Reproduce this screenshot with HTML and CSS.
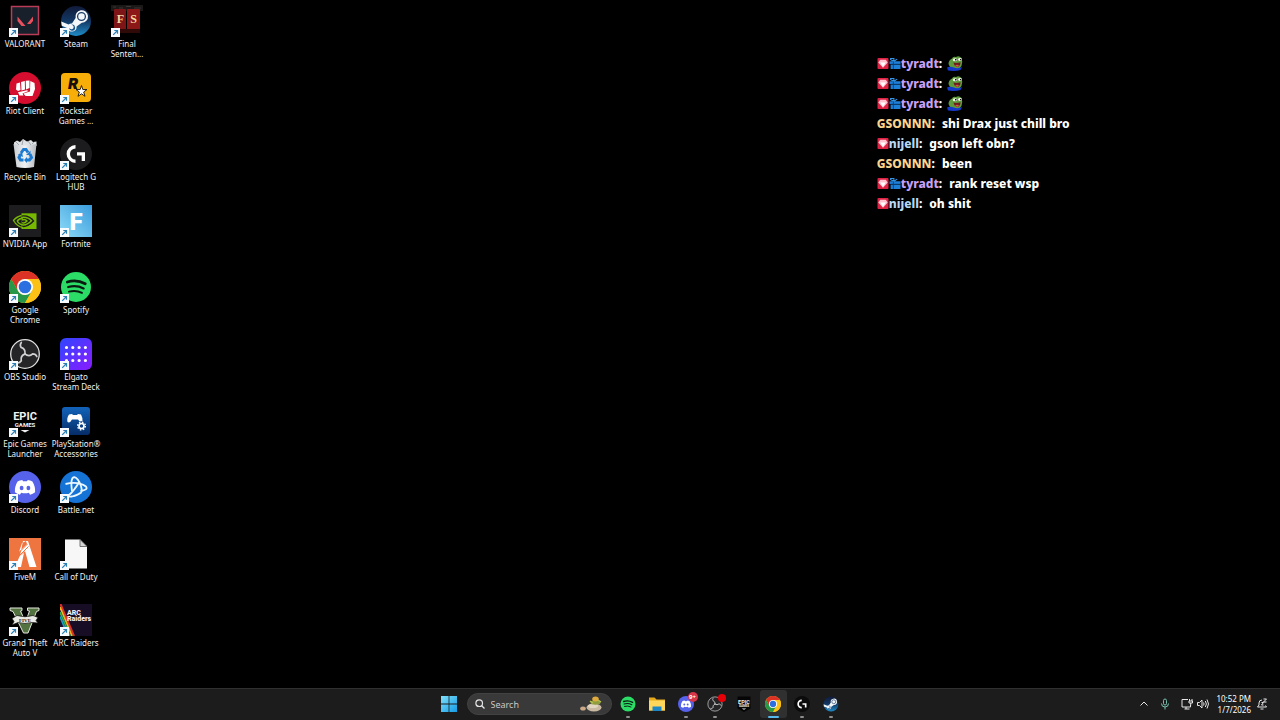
FILE: index.html
```html
<!DOCTYPE html>
<html lang="en">
  <head>
    <meta charset="UTF-8" />
    <meta name="viewport" content="width=device-width, initial-scale=1.0" />
    <title>Desktop</title>
    <link rel="stylesheet" href="styles.css">
  </head>
  <body>
    <!-- Shared icons -->
    <svg class="sprite" aria-hidden="true">
      <defs>
        <linearGradient id="steamBg" x1="0" y1="0" x2="0" y2="1">
          <stop offset="0" stop-color="#101a3a" />
          <stop offset="0.5" stop-color="#123763" />
          <stop offset="1" stop-color="#1f8cc9" />
        </linearGradient>
        <linearGradient id="fortniteBg" x1="0" y1="1" x2="1" y2="0">
          <stop offset="0" stop-color="#8fdcf8" />
          <stop offset="1" stop-color="#3a9bdc" />
        </linearGradient>
        <linearGradient id="elgatoBg" x1="0" y1="0" x2="1" y2="1">
          <stop offset="0" stop-color="#2f46ff" />
          <stop offset="1" stop-color="#8a1cff" />
        </linearGradient>
        <linearGradient id="psBg" x1="0" y1="0" x2="0" y2="1">
          <stop offset="0" stop-color="#1263ba" />
          <stop offset="1" stop-color="#062c66" />
        </linearGradient>
        <linearGradient id="winBg" x1="0" y1="0" x2="1" y2="1">
          <stop offset="0" stop-color="#7fe0fa" />
          <stop offset="1" stop-color="#149ce6" />
        </linearGradient>
        <linearGradient id="binBg" x1="0" y1="0" x2="1" y2="0">
          <stop offset="0" stop-color="#c9cdd1" />
          <stop offset="0.5" stop-color="#eef0f2" />
          <stop offset="1" stop-color="#b4b9be" />
        </linearGradient>
      </defs>
      <symbol id="steam" viewBox="0 0 32 32">
        <circle cx="16" cy="16" r="15" fill="url(#steamBg)" />
        <path d="M1.2 16.5 8.5 19.5Q10.300 18.300 12 18.500L15.600 13A6.300 6.300 0 1 1 21.800 17.800L16.600 21.500A4.600 4.600 0 0 1 7.600 23.200L1.800 20.800Z" fill="#f4f7fa" />
        <circle cx="21.500" cy="11.500" r="3.900" fill="none" stroke="#1b3c66" stroke-width="1.300" />
        <path d="M9 23.300A3.100 3.100 0 1 0 11.300 19.600L13 20.400A2.300 2.300 0 0 1 11.200 24.300Z" fill="#1c568c" />
      </symbol>
      <symbol id="logi" viewBox="0 0 32 32">
        <circle cx="16" cy="16" r="16" fill="#1c1c1e" />
        <path d="M15.500 8.800A7.200 7.200 0 0 0 15.500 23.200" fill="none" stroke="#fff" stroke-width="3.400" />
        <path d="M17 14.300H25V23H21.700V17.600H17Z" fill="#fff" />
      </symbol>
      <symbol id="chrome" viewBox="0 0 32 32">
        <circle cx="16" cy="16" r="16" fill="#fbc116" />
        <path d="M2.140 8A16 16 0 0 1 29.860 8H16L9.070 20Z" fill="#dc3226" />
        <path d="M2.140 8 9.070 20Q12 24 16 24L22.900 20 16 32A16 16 0 0 1 2.140 8Z" fill="#279847" />
        <path d="M29.860 8H16A8 8 0 0 1 22.930 20L16 32A16 16 0 0 0 29.860 8Z" fill="#fbc116" />
        <circle cx="16" cy="16" r="8" fill="#fff" />
        <circle cx="16" cy="16" r="6.300" fill="#2b6fe0" />
      </symbol>
      <symbol id="spotify" viewBox="0 0 32 32">
        <circle cx="16" cy="16" r="15" fill="#2bdc66" />
        <g fill="none" stroke="#0b1a10" stroke-linecap="round">
          <path d="M7.300 11Q16.500 8 25.300 12.700" stroke-width="2.800" />
          <path d="M8.200 16Q16.400 13.600 23.600 17.400" stroke-width="2.300" />
          <path d="M9 20.700Q15.900 18.700 22 21.900" stroke-width="1.900" />
        </g>
      </symbol>
      <symbol id="obs" viewBox="0 0 32 32">
        <circle cx="16" cy="16" r="14.300" fill="#252427" stroke="#dedede" stroke-width="1.300" />
        <g fill="none" stroke="#d0d0d0" stroke-width="1.700" stroke-linecap="round">
          <path d="M16 16.200C16.500 12.500 14.600 10.200 12 9.400C11 7.600 11.200 5.900 12.300 4.500" />
          <path d="M16 16.200C16.500 12.500 14.600 10.200 12 9.400C11 7.600 11.200 5.900 12.300 4.500" transform="rotate(120 16 16)" />
          <path d="M16 16.200C16.500 12.500 14.600 10.200 12 9.400C11 7.600 11.200 5.900 12.300 4.500" transform="rotate(240 16 16)" />
        </g>
      </symbol>
      <symbol id="discord" viewBox="0 0 32 32">
        <circle cx="16" cy="16" r="16" fill="#5662ea" />
        <path d="M13.300 9Q10.600 9.300 8.600 10.500Q5.500 15.500 5.900 21.300Q8.200 23.200 10.900 23.700L12.200 21.700Q16 22.700 19.800 21.700L21.100 23.700Q23.800 23.200 26.100 21.300Q26.500 15.500 23.400 10.500Q21.400 9.300 18.700 9L18 10.300Q16 10 14 10.300Z" fill="#fff" />
        <ellipse cx="12.600" cy="17" rx="1.900" ry="2.200" fill="#5662ea" />
        <ellipse cx="19.400" cy="17" rx="1.900" ry="2.200" fill="#5662ea" />
      </symbol>
      <symbol id="shortcut" viewBox="0 0 9 9">
        <path d="M0 0H9V9H0Z" fill="#f8fbfd" />
        <path d="M2.200 6.900 6 3M3.300 2.500H6.500V5.700" fill="none" stroke="#2b7fb5" stroke-width="1.200" />
      </symbol>
      <symbol id="diamond" viewBox="0 0 10 10">
        <rect width="10" height="10" rx="1" fill="#dc2344" />
        <path d="M2.500 1.500H7.500L9.300 4.200 5 8.800 .7 4.200Z" fill="#ffc3cf" />
        <path d="M2.500 4H7.500L5 8Z" fill="#fff" />
      </symbol>
      <symbol id="gift" viewBox="0 0 10 10">
        <path d="M0 3H10V5.500H0ZM1 6H10V10H1Z" fill="#1d7fd6" />
        <path d="M4 3V.5H1V1.500L4 3 7 1" fill="none" stroke="#3296e8" />
        <path d="M3.500 3V10M1 5.700H10" stroke="#0b3768" stroke-width=".7" />
      </symbol>
      <symbol id="pepe" viewBox="0 0 16 16">
        <path d="M1.500 9Q1.500 5 5 3.500Q6 1 9 2Q12 0 14.500 3Q16 7 14.500 11L12 14H4Z" fill="#5e9b3d" />
        <path d="M0 12.500Q3 11 7 12.500 11 14 15 12L13.500 15Q8 16.500 1 15.500Z" fill="#1539c9" />
        <ellipse cx="8" cy="4.700" rx="2.300" ry="1.500" fill="#f3f6ea" />
        <ellipse cx="13" cy="4.500" rx="1.900" ry="1.400" fill="#f3f6ea" />
        <path d="M8 4H9.500V5.500H8ZM13 4H14.300V5.300H13Z" fill="#111" />
        <path d="M6.500 7.500Q10 8.500 13.500 7.200Q13.500 11.500 10 12 7 11 6.500 7.500Z" fill="#6e1f1b" />
        <path d="M8 10.500Q10 9 12 10.300L10.300 12Z" fill="#df4c50" />
      </symbol>
    </svg>

    <main class="desktop">
      <section class="icons" aria-label="Desktop icons">
        <button class="icon">
          <svg class="art" viewBox="0 0 32 32">
            <rect x="2.500" y="1.500" width="27" height="28" fill="#17202b" stroke="#b83c57" stroke-width="1.500" />
            <path d="M8.500 11.500 16.500 21H12.500L8.500 16ZM24 11.500V16L21.500 19H18Z" fill="#e8505f" />
          </svg>
          <svg class="arrow"><use href="#shortcut" /></svg>
          <span class="label">VALORANT</span>
        </button>
        <button class="icon">
          <svg class="art" viewBox="0 0 32 32">
            <circle cx="16" cy="16" r="16" fill="#d50d2f" />
            <path d="M7.500 11.500 11 10.500 11.500 18 9 19 7 17.500ZM12 10 15.800 9 16 17.500 12.500 18.500ZM16.700 8.800 20.500 8.500V16L17 17.500ZM21.300 9 25.500 11 26 17 23.500 24H16.500L14.500 21.500 21 19.500ZM9 20.200 18 18.200 19.500 19 13.500 21.500 14.500 23.500H10.500Z" fill="#fff" />
          </svg>
          <svg class="arrow"><use href="#shortcut" /></svg>
          <span class="label">Riot Client</span>
        </button>
        <button class="icon">
          <svg class="art" viewBox="0 0 32 32">
            <path d="M5 4.500 8 2.500 11 4 14 1 18 3.500 22 2 24 4 27.500 3.500V8H5Z" fill="#dfe2e4" />
            <path d="M7 4 10 7M14 2 13 7M19 3 22 7M25 4 23 6" stroke="#8f969c" stroke-width=".8" />
            <path d="M4.500 6Q16 8.500 27.500 6L25 29Q16 31 7.500 29Z" fill="url(#binBg)" />
            <g fill="none" stroke="#1c7bd0" stroke-width="3">
              <path d="M12 15 14.500 11.500H17L19 14.500" />
              <path d="M21 16 22.500 19.500 20.500 22H17" />
              <path d="M14.500 22H11.500L10 19.500 11.500 16.500" />
            </g>
            <path d="M21.500 12.500V17H17ZM18 19V25L15 22ZM9 16.500 13 14.500 14 19Z" fill="#1c7bd0" />
          </svg>
          <span class="label">Recycle Bin</span>
        </button>
        <button class="icon">
          <svg class="art" viewBox="0 0 32 32">
            <rect width="32" height="32" fill="#1d1d1f" />
            <path d="M12.500 8.300H27.500V24H12.500Z" fill="#76b900" />
            <path d="M12.500 10.500Q21 9.500 25.500 16 19.500 22.500 12.500 22.500Z" fill="#1d1d1f" />
            <g fill="none" stroke="#76b900">
              <path d="M12.500 10.500Q7 12 4.500 15.500 8 21.500 14 22.500" stroke-width="1.300" />
              <path d="M12.500 12.500Q18.500 11.500 22.500 15.800 18 20.300 14 20Q9.500 19 8.300 16 10 13.500 14 13.300" stroke-width="1.400" />
              <path d="M13 15Q16 13.500 18 16 15 19 13 17.500" stroke-width="1.400" />
            </g>
          </svg>
          <svg class="arrow"><use href="#shortcut" /></svg>
          <span class="label">NVIDIA App</span>
        </button>
        <button class="icon">
          <svg class="art"><use href="#chrome" /></svg>
          <svg class="arrow"><use href="#shortcut" /></svg>
          <span class="label">Google Chrome</span>
        </button>
        <button class="icon">
          <svg class="art"><use href="#obs" /></svg>
          <svg class="arrow"><use href="#shortcut" /></svg>
          <span class="label">OBS Studio</span>
        </button>
        <button class="icon">
          <svg class="art" viewBox="0 0 32 32">
            <text class="epic-word" x="16" y="15" text-anchor="middle">EPIC</text>
            <text class="games-word" x="16" y="22" text-anchor="middle">GAMES</text>
            <path d="M11.500 25H20.500L16 27.500Z" fill="#eee" />
          </svg>
          <svg class="arrow"><use href="#shortcut" /></svg>
          <span class="label">Epic Games Launcher</span>
        </button>
        <button class="icon">
          <svg class="art"><use href="#discord" /></svg>
          <svg class="arrow"><use href="#shortcut" /></svg>
          <span class="label">Discord</span>
        </button>
        <button class="icon">
          <svg class="art" viewBox="0 0 32 32">
            <rect width="32" height="32" fill="#ee7440" />
            <path d="M14 3H19L27.500 29H20.500L16 13 11 18ZM13 5 10 14 18 6 17 3ZM10.500 18.500 6 29H12L15 15Z" fill="#fff" />
            <path d="M9 15.500 18.500 6M9 19 19.500 8.500" stroke="#ee7440" stroke-width="1" />
          </svg>
          <svg class="arrow"><use href="#shortcut" /></svg>
          <span class="label">FiveM</span>
        </button>
        <button class="icon">
          <svg class="art" viewBox="0 0 32 32">
            <path d="M1 4H13V6.500L11.500 7 16.500 18 20.500 7 18.500 6.500V4H30V6.500L27.500 7.500 19 29H14.500L4 7.500 1 6.500Z" fill="#52733f" stroke="#e4e5df" stroke-width="1" />
            <path d="M3 14.500 8 11.500Q16 14 24 11.500L29 13.500 27 16.500 29 19 23 18.500Q16 20.500 9 18.500L3 21 5 17.500Z" fill="#e9e9e5" stroke="#111" stroke-width=".7" />
            <text class="five-word" x="16" y="17.500" text-anchor="middle">FIVE</text>
          </svg>
          <svg class="arrow"><use href="#shortcut" /></svg>
          <span class="label">Grand Theft Auto V</span>
        </button>

        <button class="icon">
          <svg class="art"><use href="#steam" /></svg>
          <svg class="arrow"><use href="#shortcut" /></svg>
          <span class="label">Steam</span>
        </button>
        <button class="icon">
          <svg class="art" viewBox="0 0 32 32">
            <rect x="1" y="1" width="30" height="29" rx="4" fill="#f8ae08" />
            <text class="rockstar-r" x="8" y="17">R</text>
            <path d="M21.500 13.500 22.800 17.500H27L23.700 20 25 24.300 21.500 21.800 18 24.300 19.300 20 16 17.500H20.200Z" fill="#fff" stroke="#15110a" stroke-width=".9" />
          </svg>
          <svg class="arrow"><use href="#shortcut" /></svg>
          <span class="label">Rockstar Games ...</span>
        </button>
        <button class="icon">
          <svg class="art"><use href="#logi" /></svg>
          <svg class="arrow"><use href="#shortcut" /></svg>
          <span class="label">Logitech G HUB</span>
        </button>
        <button class="icon">
          <svg class="art" viewBox="0 0 32 32">
            <rect width="32" height="32" fill="url(#fortniteBg)" />
            <text class="fortnite-f" x="16" y="25" text-anchor="middle">F</text>
          </svg>
          <svg class="arrow"><use href="#shortcut" /></svg>
          <span class="label">Fortnite</span>
        </button>
        <button class="icon">
          <svg class="art"><use href="#spotify" /></svg>
          <svg class="arrow"><use href="#shortcut" /></svg>
          <span class="label">Spotify</span>
        </button>
        <button class="icon">
          <svg class="art" viewBox="0 0 32 32">
            <rect width="32" height="32" rx="6" fill="url(#elgatoBg)" />
            <path d="M6.500 9.500H26M6.500 16H26M6.500 22.500H26" stroke="#fff" stroke-width="3.200" stroke-linecap="round" stroke-dasharray="0 6.300" />
          </svg>
          <svg class="arrow"><use href="#shortcut" /></svg>
          <span class="label">Elgato Stream Deck</span>
        </button>
        <button class="icon">
          <svg class="art" viewBox="0 0 32 32">
            <rect x="2" y="2" width="28" height="28" rx="3" fill="url(#psBg)" />
            <path d="M9 9.500 12 9 13 10H17L18 9 21 9.500Q23 13 22.500 16.500 20 18 18 14.500H12Q10 18.500 7.500 17 6.500 13 9 9.500Z" fill="#fff" />
            <circle cx="21.500" cy="21" r="4.800" fill="#0a3f83" />
            <circle cx="21.500" cy="21" r="2.500" fill="none" stroke="#fff" stroke-width="1.700" />
            <circle cx="21.500" cy="21" r="3.900" fill="none" stroke="#fff" stroke-width="1.300" stroke-dasharray="1.530 1.530" />
          </svg>
          <svg class="arrow"><use href="#shortcut" /></svg>
          <span class="label">PlayStation® Accessories</span>
        </button>
        <button class="icon">
          <svg class="art" viewBox="0 0 32 32">
            <circle cx="16" cy="16" r="16" fill="#1673d6" />
            <g fill="none" stroke="#e9f7ff" stroke-width="1.800">
              <path d="M12 20Q10 6 14.500 6.200 18 7 21 15 23 22 19.500 22.500" />
              <path d="M5.500 13Q18 10 26 15.500 28.500 19 20.500 20" />
              <path d="M19.500 10.500Q14 20 8.500 24.500 7 26 12 25.500 18 24 20 22" />
            </g>
          </svg>
          <svg class="arrow"><use href="#shortcut" /></svg>
          <span class="label">Battle.net</span>
        </button>
        <button class="icon">
          <svg class="art" viewBox="0 0 32 32">
            <path d="M5 1.500H20L27 8.500V30.500H5Z" fill="#f7f7f7" />
            <path d="M20 1.500V8.500H27Z" fill="#d5d5d5" stroke="#555" stroke-width=".8" />
          </svg>
          <svg class="arrow"><use href="#shortcut" /></svg>
          <span class="label">Call of Duty</span>
        </button>
        <button class="icon">
          <svg class="art" viewBox="0 0 32 32">
            <rect width="32" height="32" fill="#170d24" />
            <g fill="none" stroke-width="1.800">
              <path d="M.5 0 14 32" stroke="#df2d2b" stroke-width="2" />
              <path d="M0 3 12 32" stroke="#efb51e" />
              <path d="M0 8 10 32" stroke="#2dae57" />
              <path d="M0 12.500 8 32" stroke="#1d9ac0" />
            </g>
            <text class="arc-word" x="7" y="11">ARC</text>
            <text class="arc-word" x="7" y="17">Raiders</text>
          </svg>
          <svg class="arrow"><use href="#shortcut" /></svg>
          <span class="label">ARC Raiders</span>
        </button>

        <button class="icon">
          <svg class="art" viewBox="0 0 32 32">
            <path d="M0 0H32V6H0Z" fill="#1b1818" />
            <path d="M2 2H5M8 3H12M15 1.500H20M23 3H30M4 5H9M20 5H26" stroke="#3b3535" />
            <rect x="3" y="4" width="12" height="22" rx="1" fill="#7d1516" />
            <rect x="16" y="4" width="13" height="22" rx="1" fill="#8c1717" />
            <path d="M4 24H29V28H4Z" fill="#300909" />
            <text class="fs-word" x="9.500" y="18" text-anchor="middle">F</text>
            <text class="fs-word" x="22.500" y="18" text-anchor="middle">S</text>
          </svg>
          <svg class="arrow"><use href="#shortcut" /></svg>
          <span class="label">Final Senten...</span>
        </button>
      </section>

      <section class="chat" aria-label="Chat">
        <p class="line"><svg class="badge"><use href="#diamond" /></svg><svg class="badge"><use href="#gift" /></svg><span class="tyradt">tyradt</span>:<svg class="emote"><use href="#pepe" /></svg></p>
        <p class="line"><svg class="badge"><use href="#diamond" /></svg><svg class="badge"><use href="#gift" /></svg><span class="tyradt">tyradt</span>:<svg class="emote"><use href="#pepe" /></svg></p>
        <p class="line"><svg class="badge"><use href="#diamond" /></svg><svg class="badge"><use href="#gift" /></svg><span class="tyradt">tyradt</span>:<svg class="emote"><use href="#pepe" /></svg></p>
        <p class="line"><span class="gsonnn">GSONNN</span>:<span class="text">shi Drax just chill bro</span></p>
        <p class="line"><svg class="badge"><use href="#diamond" /></svg><span class="nijell">nijell</span>:<span class="text">gson left obn?</span></p>
        <p class="line"><span class="gsonnn">GSONNN</span>:<span class="text">been</span></p>
        <p class="line"><svg class="badge"><use href="#diamond" /></svg><svg class="badge"><use href="#gift" /></svg><span class="tyradt">tyradt</span>:<span class="text">rank reset wsp</span></p>
        <p class="line"><svg class="badge"><use href="#diamond" /></svg><span class="nijell">nijell</span>:<span class="text">oh shit</span></p>
      </section>
    </main>

    <footer class="taskbar">
      <nav class="apps" aria-label="Taskbar">
        <button class="app" aria-label="Start">
          <svg class="app-art" viewBox="0 0 16 16">
            <path d="M0 0H7.600V7.600H0ZM8.400 0H16V7.600H8.400ZM0 8.400H7.600V16H0ZM8.400 8.400H16V16H8.400Z" fill="url(#winBg)" />
          </svg>
        </button>
        <label class="search">
          <svg class="search-icon" viewBox="0 0 10 10">
            <path d="M6.700 6.700 9.500 9.500" stroke="#e4e4e4" stroke-width="1.300" />
            <circle cx="4.200" cy="4.200" r="3.300" fill="none" stroke="#e4e4e4" stroke-width="1.200" />
          </svg>
          <input type="search" placeholder="Search" aria-label="Search" />
          <svg class="stones" viewBox="0 0 22 16">
            <ellipse cx="3" cy="12.500" rx="2.800" ry="2" fill="#c9a886" />
            <ellipse cx="14" cy="11.500" rx="7.500" ry="4" fill="#c9b9a2" />
            <ellipse cx="13" cy="10" rx="5" ry="2" fill="#e2d6c3" />
            <ellipse cx="15.500" cy="6.500" rx="5" ry="2.200" fill="#8f9d3f" />
            <ellipse cx="15.500" cy="3" rx="3.300" ry="2.500" fill="#dfaa3e" />
            <path d="M10 5 13 7M18 4 21 6" stroke="#b8c24f" stroke-width="1.500" />
          </svg>
        </label>
        <button class="app running" aria-label="Spotify"><svg class="app-art"><use href="#spotify" /></svg></button>
        <button class="app" aria-label="File Explorer">
          <svg class="app-art" viewBox="0 0 16 16">
            <path d="M0 1.500H5.500L7.500 3.500H16V14.500H0Z" fill="#e7a91c" />
            <path d="M0 4.500H16V14.500H0Z" fill="#ffd65c" />
            <path d="M3.500 15V10.500H12.500V15" fill="#1c86c6" />
          </svg>
        </button>
        <button class="app running" aria-label="Discord">
          <svg class="app-art"><use href="#discord" /></svg>
          <span class="count">9+</span>
        </button>
        <button class="app running" aria-label="OBS Studio">
          <svg class="app-art"><use href="#obs" /></svg>
          <span class="recording"></span>
        </button>
        <button class="app" aria-label="Epic Games Launcher">
          <svg class="app-art" viewBox="0 0 32 32">
            <path d="M3 1H29V25L16 32 3 25Z" fill="#050505" />
            <text class="epic-word" x="16" y="15" text-anchor="middle">EPIC</text>
            <text class="games-word" x="16" y="22" text-anchor="middle">GAMES</text>
            <path d="M11.500 25H20.500L16 27.500Z" fill="#eee" />
          </svg>
        </button>
        <button class="app running active" aria-label="Google Chrome"><svg class="app-art"><use href="#chrome" /></svg></button>
        <button class="app running" aria-label="Logitech G HUB">
          <svg class="app-art" viewBox="0 0 32 32">
            <circle cx="16" cy="16" r="16" fill="#0b0b0b" />
            <path d="M15.500 8.800A7.200 7.200 0 0 0 15.500 23.200" fill="none" stroke="#fff" stroke-width="3.400" />
            <path d="M17 14.300H25V23H21.700V17.600H17Z" fill="#fff" />
          </svg>
        </button>
        <button class="app running" aria-label="Steam"><svg class="app-art"><use href="#steam" /></svg></button>
      </nav>

      <div class="tray">
        <button class="tray-item chevron" aria-label="Show hidden icons">
          <svg viewBox="0 0 12 12"><path d="M2.500 7.500 6 4 9.500 7.500" /></svg>
        </button>
        <button class="tray-item mic" aria-label="Microphone">
          <svg viewBox="0 0 12 12"><rect x="4.500" y="1" width="3" height="6" rx="1.500" /><path d="M2.500 5.500Q2.500 9 6 9T9.500 5.500M6 9V11.500" /></svg>
        </button>
        <button class="tray-item" aria-label="Network">
          <svg viewBox="0 0 12 12"><path d="M7 1.500H1V9H9.500V7M3.500 11H8.500M5 9V11M8.500 1V3M11 1V3M8 3H11.500V5H8ZM9.700 5V7.500" /></svg>
        </button>
        <button class="tray-item" aria-label="Volume">
          <svg viewBox="0 0 12 12"><path d="M.5 4.500H2.500L5 2V10L2.500 7.500H.5ZM6.500 4.500Q7.700 6 6.500 7.500M8.300 3Q10.500 6 8.300 9M10 1.500Q13 6 10 10.500" /></svg>
        </button>
        <time class="clock" datetime="2026-01-07T22:52">10:52 PM<br />1/7/2026</time>
        <button class="tray-item" aria-label="Notifications">
          <svg viewBox="0 0 12 12"><path d="M6 2Q3 2 3 5V7L1.500 9H10.500L9.500 7.500M4.500 11H7.500M7.500 1H10.500L7.500 4H10.500M5.500 4.500H7.500L5.500 7H7.500" /></svg>
        </button>
      </div>
    </footer>
  </body>
</html>
```

FILE: styles.css
```css
* {
  box-sizing: border-box;
}
body {
  display: flex;
  flex-direction: column;
  min-height: 100vh;
  margin: 0;
  background-color: #000;
  color: #fff;
  font-family: "Noto Sans", "Open Sans", sans-serif;
}
button {
  padding: 0;
  border: none;
  background: none;
  color: inherit;
  font-family: inherit;
}
.sprite {
  display: block;
  width: 0;
  height: 0;
}

/* Desktop */
.desktop {
  flex: 1;
  display: flex;
  justify-content: space-between;
  align-items: stretch;
}
.icons {
  display: grid;
  grid-auto-flow: column;
  grid-template-rows: repeat(10, 1fr);
  grid-auto-columns: 50px;
  column-gap: 1px;
  padding: 5px 0 17px;
}
.icon {
  position: relative;
  display: flex;
  flex-direction: column;
  align-items: center;
  gap: 2px;
}
.art {
  width: 32px;
  height: 32px;
}
.arrow {
  position: absolute;
  top: 23px;
  left: 9px;
  width: 9px;
  height: 9px;
}
.label {
  color: #f2f2f2;
  font-size: 8px;
  line-height: 10px;
  text-align: center;
}
.epic-word {
  fill: #f2f2f2;
  font: bold 11px "Roboto", sans-serif;
}
.games-word {
  fill: #f2f2f2;
  font: bold 6px "Roboto", sans-serif;
}
.five-word {
  fill: #222;
  font: bold 5px "Liberation Serif", serif;
}
.rockstar-r {
  fill: #15110a;
  font: italic 900 15px "Inter", sans-serif;
}
.fortnite-f {
  fill: #fff;
  font: 900 24px "Roboto", sans-serif;
}
.arc-word {
  fill: #f4eef5;
  font: 900 7px "Roboto", sans-serif;
}
.fs-word {
  fill: #f3d9a4;
  font: bold 12px "Liberation Serif", serif;
}

/* Chat overlay */
.chat {
  width: 31.5%;
  padding-top: 53px;
  font-size: 12px;
  font-weight: 800;
}
.line {
  display: flex;
  align-items: center;
  height: 20px;
  margin: 0;
}
.badge {
  width: 12px;
  height: 11px;
}
.emote {
  width: 16px;
  height: 16px;
  margin-left: 5px;
}
.text {
  margin-left: 7px;
}
.tyradt {
  color: #c9a0f5;
}
.gsonnn {
  color: #fbd48e;
}
.nijell {
  color: #b5d9f7;
}

/* Taskbar */
.taskbar {
  display: grid;
  grid-template-columns: 1fr auto 1fr;
  align-items: center;
  height: 32px;
  background-color: #1c1c1c;
  box-shadow: inset 0 1px #303030;
}
.apps {
  grid-column: 2;
  display: flex;
  align-items: center;
  gap: 2px;
}
.app {
  position: relative;
  display: flex;
  align-items: center;
  justify-content: center;
  width: 27px;
  height: 28px;
  border-radius: 3px;
}
.app-art {
  width: 16px;
  height: 16px;
}
.active {
  background-color: #303030;
}
.running::after {
  content: "";
  position: absolute;
  bottom: 0;
  width: 4px;
  height: 2px;
  border-radius: 1px;
  background-color: #8e8e8e;
}
.active::after {
  width: 11px;
  background-color: #55b9ee;
}
.count {
  position: absolute;
  top: 2px;
  right: 2px;
  width: 10px;
  border-radius: 5px;
  background-color: #d6354a;
  font-size: 6px;
  font-weight: bold;
  line-height: 10px;
}
.recording {
  position: absolute;
  top: 4px;
  right: 3px;
  width: 8px;
  height: 8px;
  border-radius: 50%;
  background-color: #e80008;
}
.search {
  display: flex;
  align-items: center;
  gap: 6px;
  width: 145px;
  height: 22px;
  margin: 0 1px 0 2px;
  padding: 0 9px 0 7px;
  border: 1px solid #424242;
  border-radius: 11px;
  background-color: #393939;
}
.search-icon {
  width: 10px;
  height: 10px;
}
.search input {
  flex: 1;
  min-width: 0;
  padding: 0;
  border: none;
  outline: none;
  background: none;
  color: #fff;
  font-family: inherit;
  font-size: 9px;
}
.search input::placeholder {
  color: #c8c8c8;
}
.stones {
  width: 22px;
  height: 16px;
}
.tray {
  display: flex;
  align-items: center;
  justify-content: flex-end;
  gap: 4px;
  padding-right: 12px;
}
.tray-item {
  width: 12px;
  height: 12px;
}
.tray-item svg {
  display: block;
  fill: none;
  stroke: #e6e6e6;
}
.chevron {
  margin-right: 5px;
}
.mic {
  margin-right: 6px;
}
.mic svg {
  stroke: #79bfae;
}
.clock {
  margin: 0 1px 0 3px;
  font-size: 8px;
  line-height: 11px;
  text-align: right;
}
```
